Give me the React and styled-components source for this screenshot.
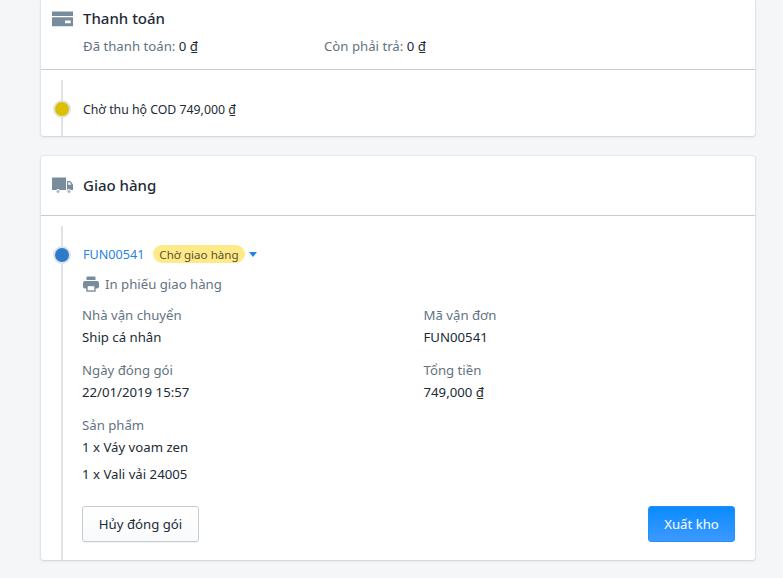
import styled, { createGlobalStyle } from "styled-components";

const GlobalStyle = createGlobalStyle`
  html, body {
    margin: 0;
    padding: 0;
    height: 100%;
    overflow: hidden;
    background: #f4f6f8;
    font-family: "Noto Sans", Roboto, sans-serif;
    color: #212b36;
    font-size: 13.2px;
  }
`;

const Page = styled.div`
  width: 783px;
  height: 578px;
  padding: 0 28px 0 41px;
  box-sizing: border-box;
  display: flex;
  flex-direction: column;
  gap: 20px;
`;
const Card = styled.section`
  background: #fff;
  border-radius: ${(props) => (props.$flushTop ? "0 0 3px 3px" : "3px")};
  box-shadow: 0 0 0 1px rgba(63, 63, 68, 0.05), 0 1px 3px 0 rgba(63, 63, 68, 0.15);
`;
const PaymentHeader = styled.div`
  height: 70px;
  box-sizing: border-box;
  padding-top: 8px;
  border-bottom: 1px solid #c4cdd5;
`;
const Title = styled.div`
  display: flex;
  align-items: center;
  gap: 10px;
  padding-left: 11px;
  height: 20px;
  font-size: 15px;
  font-weight: 500;
  line-height: 20px;
  svg {
    width: 21px;
    height: 21px;
    color: #798c9c;
  }
`;
const ShipHeader = styled(Title)`
  height: 57px;
  padding-bottom: 2px;
  box-sizing: content-box;
  border-bottom: 1px solid #c4cdd5;
`;
const Totals = styled.div`
  display: flex;
  padding: 8px 0 0 42px;
  line-height: 20px;
`;
const Total = styled.div`
  width: 241px;
  color: #637381;
  b {
    font-weight: 400;
    color: #212b36;
  }
`;
const Timeline = styled.div`
  display: flex;
  margin-top: 10px;
`;
const Rail = styled.div`
  position: relative;
  flex: 0 0 42px;
  &::before {
    content: "";
    position: absolute;
    left: 20px;
    top: 0;
    bottom: 0;
    width: 2px;
    background: #dfe3e8;
  }
`;
const Dot = styled.span`
  position: absolute;
  left: 14px;
  top: ${(props) => props.$top}px;
  width: 14px;
  height: 14px;
  border-radius: 50%;
  background: ${(props) => props.$color};
  box-shadow: 0 0 0 2px #dfe3e8;
`;
const TimelineBody = styled.div`
  flex: 1;
  min-width: 0;
`;
const CodText = styled.div`
  height: 56px;
  display: flex;
  align-items: center;
  font-size: 12.3px;
  padding-top: 2px;
  box-sizing: border-box;
`;
const ShipRow = styled.div`
  display: flex;
  align-items: center;
  height: 20px;
  margin-top: 18px;
`;
const OrderLink = styled.span`
  color: #1f84e6;
  font-size: 12.6px;
`;
const Badge = styled.span`
  margin-left: 9px;
  height: 18px;
  padding: 0 6px;
  display: inline-flex;
  align-items: center;
  border-radius: 9px;
  background: #ffea8a;
  color: #595130;
  font-size: 11.6px;
`;
const Caret = styled.span`
  margin-left: 4px;
  width: 0;
  height: 0;
  border-left: 4.5px solid transparent;
  border-right: 4.5px solid transparent;
  border-top: 5px solid #1f84e6;
`;
const PrintRow = styled.div`
  display: flex;
  align-items: center;
  gap: 6px;
  margin-top: 10px;
  height: 20px;
  color: #637381;
  svg {
    width: 16px;
    height: 16px;
    color: #798c9c;
  }
`;
const Details = styled.div`
  display: grid;
  grid-template-columns: 341.5px 1fr;
  row-gap: 13px;
  margin-top: 11px;
  margin-left: -1px;
`;
const Field = styled.div`
  line-height: 20px;
`;
const Label = styled.div`
  color: #637381;
  margin-bottom: 2px;
`;
const ProductLine = styled.div`
  line-height: 20px;
  margin-top: ${(props) => (props.$gap ? "7px" : "0")};
`;
const Actions = styled.div`
  display: flex;
  justify-content: space-between;
  margin: 22px 20px 18px -1px;
`;
const Button = styled.button`
  height: 36px;
  box-sizing: border-box;
  border-radius: 3px;
  font-family: inherit;
  font-size: 13.2px;
  padding: 0;
`;
const CancelButton = styled(Button)`
  width: 117px;
  color: #212b36;
  border: 1px solid #c4cdd5;
  background: linear-gradient(to bottom, #fff, #f9fafb);
  box-shadow: 0 1px 0 0 rgba(22, 29, 37, 0.05);
`;
const SubmitButton = styled(Button)`
  width: 87px;
  color: #fff;
  border: 1px solid #1e90ff;
  background: linear-gradient(to bottom, #0a8aff, #3d99ff);
`;

const CardIcon = () => (
  <svg viewBox="0 0 21 21">
    <path
      fill="currentColor"
      fillRule="evenodd"
      d="M0 3.5h21V8H0zM0 9.2h21v9H0zM13 12.5v2.7h5.7v-2.7z"
    />
  </svg>
);

const TruckIcon = () => (
  <svg viewBox="0 0 21 21">
    <path fill="currentColor" d="M0 3.5h14V16H0z" />
    <path fill="currentColor" fillRule="evenodd" d="M15 7h3.2L21 10.5V16h-6zM16.2 8.2v2.6h3.2l-1.8-2.6z" />
    <circle cx="6" cy="17.5" r="2" fill="#a9b5c0" stroke="#fff" strokeWidth="1" />
    <circle cx="17" cy="17.5" r="2" fill="#a9b5c0" stroke="#fff" strokeWidth="1" />
  </svg>
);

const PrintIcon = () => (
  <svg viewBox="0 0 16 16">
    <path fill="currentColor" d="M3.5 1.5A1 1 0 0 1 4.5.5h7a1 1 0 0 1 1 1v2.5h-9z" />
    <rect x="0" y="5" width="16" height="7.5" rx="2" fill="currentColor" />
    <rect x="4" y="9.5" width="8" height="5.5" fill="#fff" stroke="currentColor" strokeWidth="1.4" />
  </svg>
);

const App = () => (
  <>
    <GlobalStyle />
    <Page>
      <Card $flushTop>
        <PaymentHeader>
          <Title>
            <CardIcon />
            Thanh toán
          </Title>
          <Totals>
            <Total>
              Đã thanh toán: <b>0 ₫</b>
            </Total>
            <Total>
              Còn phải trả: <b>0 ₫</b>
            </Total>
          </Totals>
        </PaymentHeader>
        <Timeline>
          <Rail>
            <Dot $top={22} $color="#dcc000" />
          </Rail>
          <TimelineBody>
            <CodText>Chờ thu hộ COD 749,000 ₫</CodText>
          </TimelineBody>
        </Timeline>
      </Card>
      <Card>
        <ShipHeader>
          <TruckIcon />
          Giao hàng
        </ShipHeader>
        <Timeline>
          <Rail>
            <Dot $top={22} $color="#2f7bcb" />
          </Rail>
          <TimelineBody>
            <ShipRow>
              <OrderLink>FUN00541</OrderLink>
              <Badge>Chờ giao hàng</Badge>
              <Caret />
            </ShipRow>
            <PrintRow>
              <PrintIcon />
              In phiếu giao hàng
            </PrintRow>
            <Details>
              <Field>
                <Label>Nhà vận chuyển</Label>
                Ship cá nhân
              </Field>
              <Field>
                <Label>Mã vận đơn</Label>
                FUN00541
              </Field>
              <Field>
                <Label>Ngày đóng gói</Label>
                22/01/2019 15:57
              </Field>
              <Field>
                <Label>Tổng tiền</Label>
                749,000 ₫
              </Field>
              <Field>
                <Label>Sản phẩm</Label>
                <ProductLine>1 x Váy voam zen</ProductLine>
                <ProductLine $gap>1 x Vali vải 24005</ProductLine>
              </Field>
            </Details>
            <Actions>
              <CancelButton>Hủy đóng gói</CancelButton>
              <SubmitButton>Xuất kho</SubmitButton>
            </Actions>
          </TimelineBody>
        </Timeline>
      </Card>
    </Page>
  </>
);

export default App;
